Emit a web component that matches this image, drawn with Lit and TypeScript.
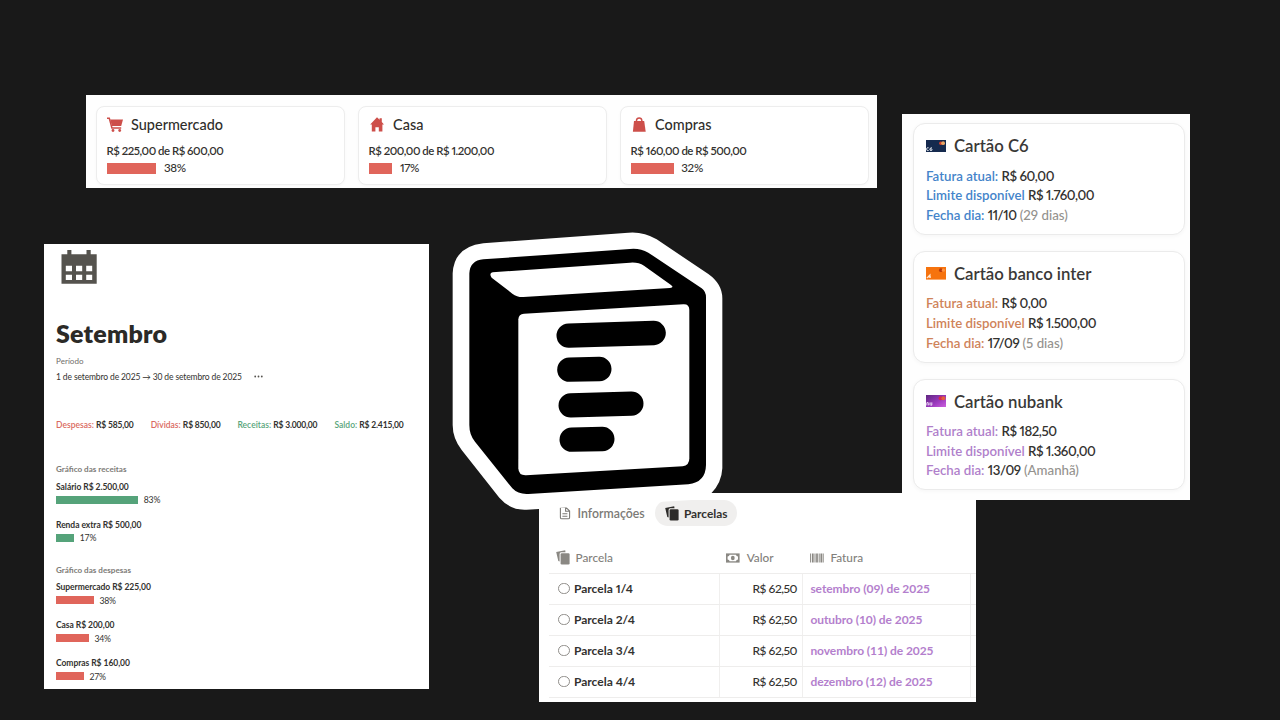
import { LitElement, html, css, svg } from "lit";
import { customElement } from "lit/decorators.js";

const base = css`
  :host {
    display: block;
    box-sizing: border-box;
    font-family: Lato, sans-serif;
    font-variant-numeric: proportional-nums;
    color: #33322f;
    background: #fff;
  }
  * { box-sizing: border-box; }
  svg { display: block; flex: none; }
`;

const cardsIcon = svg`
  <path d="M0.2 1.9 9.2 0.3 9.5 2.3H5.2Q3.6 2.4 3.6 4V11.4L2.3 11Z"/>
  <rect x="4.6" y="3.2" width="9" height="11.2" rx="1.2"/>`;

@customElement("budget-panel")
class BudgetPanel extends LitElement {
  static styles = [base, css`
    :host { display: grid; grid-template-columns: repeat(3, 248.5px); column-gap: 13.5px; padding: 11.5px 0 0 10px; background: #fefefe; }
    .card { height: 78.5px; border: 1px solid #ededed; border-radius: 8px; padding: 7px 0 0 9.6px; box-shadow: 0 1px 3px rgba(0, 0, 0, .03); background: #fff; }
    .head { display: flex; align-items: center; height: 21px; gap: 8.5px; font-size: 14.45px; font-weight: 500; color: #2f2e2b; }
    .sub { line-height: 16px; margin-top: 8px; font-size: 11.4px; font-weight: 600; letter-spacing: -.48px; }
    .meter { display: flex; align-items: center; gap: 7.6px; height: 12px; margin-top: 3px; font-size: 11.6px; font-weight: 500; line-height: 12px; letter-spacing: -.3px; }
    .bar { height: 11px; background: #e0655b; }
    .icon { fill: #cd4f4a; }
    .stroke { fill: none; stroke: #cd4f4a; stroke-width: 1.5; }
  `];
  items = [
    { name: "Supermercado", sub: "R$ 225,00 de R$ 600,00", pct: 38, w: 49.7, icon: svg`<path class="stroke" d="M0 1.2H2.3L4.9 10.9H14.2"/><path d="M3.2 2.4H16L14.2 9H4.9Z"/><circle cx="6" cy="13.5" r="1.4"/><circle cx="12.7" cy="13.5" r="1.4"/>` },
    { name: "Casa", sub: "R$ 200,00 de R$ 1.200,00", pct: 17, w: 23.7, icon: svg`<path d="M8 .2 10.6 2.8V1.2H12.8V5L15 7.6H13.4V14.6H9.8V10.2H6.4V14.6H2.8V7.6H1.2Z"/>` },
    { name: "Compras", sub: "R$ 160,00 de R$ 500,00", pct: 32, w: 43, icon: svg`<path d="M3 4H13.2L14.7 14.8H1.9Z"/><path class="stroke" d="M5.5 5V3.2Q5.7 .9 8.2 .9 10.6 .9 10.8 3.2V5"/>` },
  ];
  render() {
    return this.items.map((i) => html`
      <section class="card">
        <div class="head"><svg class="icon" width="16" height="16" viewBox="0 0 16 16">${i.icon}</svg><span>${i.name}</span></div>
        <div class="sub">${i.sub}</div>
        <div class="meter"><div class="bar" style="width:${i.w}px"></div><span>${i.pct}%</span></div>
      </section>`);
  }
}

@customElement("cards-panel")
class CardsPanel extends LitElement {
  static styles = [base, css`
    :host { display: flex; flex-direction: column; gap: 16px; padding: 9.3px 5.5px 0 11.3px; background: #fefefe; }
    .card { height: 111.7px; border: 1px solid #ebebeb; border-radius: 12px; padding: 10px 0 0 12px; background: #fff; box-shadow: 0 1px 4px rgba(0, 0, 0, .04); }
    .head { display: flex; align-items: center; gap: 8px; height: 23px; font-size: 16.75px; font-weight: 600; color: #3a3937; }
    .rows { margin-top: 9.4px; font-size: 13.25px; line-height: 19.6px; font-weight: 600; white-space: nowrap; }
    .num { letter-spacing: -.45px; color: #33322f; }
    .note { color: #94928e; font-weight: 500; }
    .blue { color: #4484ca; }
    .orange { color: #cf8359; }
    .purple { color: #b07fcb; }
  `];
  items = [
    { name: "Cartão C6", tone: "blue", due: "R$ 60,00", limit: "R$ 1.760,00", day: "11/10", note: "(29 dias)", art: svg`<rect width="20" height="12.6" fill="#152a4e"/><circle cx="14.8" cy="3.2" r="1.7" fill="#d5402c"/><circle cx="17.1" cy="3.2" r="1.9" fill="#e9a765"/><path d="M2.6 7.8H1.3Q.7 7.8 .7 9.2T1.3 10.5H2.6M5.8 7.6Q3.8 8 3.8 9.5 4 10.6 5 10.6 6.2 10.4 6.1 9.4 5.6 8.6 4.2 9.2" fill="none" stroke="#e8edf4" stroke-width="1"/>` },
    { name: "Cartão banco inter", tone: "orange", due: "R$ 0,00", limit: "R$ 1.500,00", day: "17/09", note: "(5 dias)", art: svg`<rect width="20" height="12.6" fill="#f6730e"/><circle cx="14.9" cy="3.2" r="1.9" fill="#b93a0d"/><circle cx="17.4" cy="3.2" r="1.6" fill="#ff9340"/><path d="M.8 11.2 4 7.8V11M2 10H5" fill="none" stroke="#ffe8d4" stroke-width="1.1"/>` },
    { name: "Cartão nubank", tone: "purple", due: "R$ 182,50", limit: "R$ 1.360,00", day: "13/09", note: "(Amanhã)", art: svg`<defs><linearGradient id="nu" x2="1" y2="1"><stop stop-color="#5f2780"/><stop offset=".55" stop-color="#9a38bd"/><stop offset="1" stop-color="#cf63e0"/></linearGradient></defs><rect width="20" height="12.6" fill="url(#nu)"/><circle cx="14.6" cy="3.2" r="2" fill="#d62b4b"/><circle cx="17.4" cy="3.2" r="2" fill="#e2603c"/><path d="M.9 10.4V7.7Q2.6 7.2 2.7 8.6V10.4M4.1 7.4V9.6Q4.4 10.6 5.8 10.1V7.4" fill="none" stroke="#f0e0f8" stroke-width="1"/>` },
  ];
  render() {
    return this.items.map((i) => html`
      <section class="card">
        <div class="head"><svg width="20" height="12.6" viewBox="0 0 20 12.6">${i.art}</svg><span>${i.name}</span></div>
        <div class="rows ${i.tone}">
          <div>Fatura atual: <span class="num">${i.due}</span></div>
          <div>Limite disponível <span class="num">${i.limit}</span></div>
          <div>Fecha dia: <span class="num">${i.day}</span> <span class="note">${i.note}</span></div>
        </div>
      </section>`);
  }
}

@customElement("month-panel")
class MonthPanel extends LitElement {
  static styles = [base, css`
    :host { padding: 5px 0 0 12px; font-size: 8.5px; font-variant-numeric: tabular-nums; }
    .cal { margin-left: 5px; }
    h1 { margin: 31.5px 0 0; font-size: 25px; line-height: 32px; font-weight: 800; letter-spacing: .2px; color: #2b2a27; }
    .label { margin-top: 7px; font-size: 8px; line-height: 10px; letter-spacing: .05px; color: #6f6d69; }
    .date { display: flex; align-items: center; margin-top: 6.3px; gap: 12px; line-height: 10px; letter-spacing: -.13px; white-space: pre; }
    .stats { display: flex; gap: 17px; margin-top: 38.7px; line-height: 10px; white-space: nowrap; font-weight: 700; }
    .stats b { font-weight: 700; color: #33322f; letter-spacing: -.17px; }
    .stats .red, .stats .green { font-weight: 600; letter-spacing: .02px; }
    .red { color: #da6a61; }
    .green { color: #58a57b; }
    .chart { margin-top: 34px; }
    .chart + .chart { margin-top: 6.6px; }
    h2 { margin: 0; font-size: 8.1px; font-weight: 700; line-height: 10px; color: #7d7b77; }
    .item { height: 38px; }
    h2 + .item { margin-top: 7.6px; }
    .name { line-height: 10px; font-weight: 700; letter-spacing: -.05px; }
    .meter { display: flex; align-items: center; gap: 5.8px; height: 9px; margin-top: 3.4px; font-size: 8.7px; letter-spacing: -.25px; }
    .bar { height: 8.3px; }
    .bar.g { background: #55a37a; }
    .bar.r { background: #e0655b; }
  `];
  stats = [["Despesas:", "R$ 585,00", "red"], ["Dívidas:", "R$ 850,00", "red"], ["Receitas:", "R$ 3.000,00", "green"], ["Saldo:", "R$ 2.415,00", "green"]];
  charts = [
    { title: "Gráfico das receitas", tone: "g", items: [["Salário R$ 2.500,00", 83, 82], ["Renda extra R$ 500,00", 17, 18]] },
    { title: "Gráfico das despesas", tone: "r", items: [["Supermercado R$ 225,00", 38, 37.7], ["Casa R$ 200,00", 34, 32.7], ["Compras R$ 160,00", 27, 27.7]] },
  ];
  render() {
    return html`
      <svg class="cal" width="36" height="36" viewBox="0 0 36 36">
        <path fill="#55534e" fill-rule="evenodd" d="M.5 5.3H6.3V1H10.4V5.3H25.5V1H29.7V5.3H35.7V34.7H.5ZM4.8 16.8V22.2H11V16.8ZM15 16.8V22.2H21.2V16.8ZM25.2 16.8V22.2H31.2V16.8ZM4.8 25.7V30.9H11V25.7ZM15 25.7V30.9H21.2V25.7ZM25.2 25.7V30.9H31.2V25.7Z"/>
      </svg>
      <h1>Setembro</h1>
      <div class="label">Período</div>
      <div class="date"><span>1 de setembro de 2025 → 30 de setembro de 2025</span><svg width="9" height="3" viewBox="0 0 9 3" fill="#55534e"><circle cx="1.2" cy="1.5" r=".9"/><circle cx="4.5" cy="1.5" r=".9"/><circle cx="7.8" cy="1.5" r=".9"/></svg></div>
      <div class="stats">${this.stats.map(([l, v, t]) => html`<span><span class=${t}>${l}</span> <b>${v}</b></span>`)}</div>
      ${this.charts.map((c) => html`<section class="chart"><h2>${c.title}</h2>
        ${c.items.map(([n, p, w]) => html`<div class="item"><div class="name">${n}</div>
          <div class="meter"><div class="bar ${c.tone}" style="width:${w}px"></div><span>${p}%</span></div></div>`)}
      </section>`)}`;
  }
}

@customElement("installments-panel")
class InstallmentsPanel extends LitElement {
  static styles = [base, css`
    :host { padding: 6.5px 0 0 10.5px; font-size: 12px; }
    .tabs { display: flex; height: 26.5px; }
    .tab { display: flex; align-items: center; color: #7c7a76; font-weight: 600; }
    .info { padding-left: 8.5px; gap: 6px; font-size: 12.3px; width: 106.4px; white-space: nowrap; }
    .active { width: 82px; padding-left: 9.6px; gap: 4.8px; border-radius: 14px; background: #f0efee; color: #32312e; font-weight: 700; font-size: 11.9px; }
    .row { display: grid; grid-template-columns: 171px 83px 168px 6px; height: 31px; border-bottom: 1px solid #eeedec; }
    .row > div { display: flex; align-items: center; border-right: 1px solid #f0efee; padding-bottom: .6px; }
    .row > div:last-child { border-right: 0; }
    .row.top { margin-top: 17px; height: 30.5px; color: #82807b; font-weight: 500; font-size: 11.8px; }
    .row.top > div { border-right: 0; gap: 6px; }
    .row.top .c1 { padding-left: 7px; gap: 5.4px; }
    .row.top .c2 { padding-left: 5.8px; gap: 6.8px; }
    .row.top .c3 { padding-left: 7.3px; }
    .name { padding-left: 9px; gap: 4.4px; font-weight: 700; }
    .ring { width: 11.5px; height: 11.5px; border: 1px solid #8f8d89; border-radius: 50%; }
    .val { justify-content: flex-end; padding-right: 5px; font-weight: 500; letter-spacing: -.45px; }
    .inv { padding-left: 7.3px; color: #b47fcd; font-weight: 700; letter-spacing: -.06px; font-variant-numeric: tabular-nums; }
  `];
  rows = [["Parcela 1/4", "setembro (09) de 2025"], ["Parcela 2/4", "outubro (10) de 2025"], ["Parcela 3/4", "novembro (11) de 2025"], ["Parcela 4/4", "dezembro (12) de 2025"]];
  render() {
    return html`
      <div class="tabs">
        <div class="tab info"><svg width="14" height="14" viewBox="0 0 14 14" fill="none" stroke="#7c7a76" stroke-width="1.1"><path d="M2.6 1.2H7.8L11.6 5V11.4Q11.6 12.8 10.2 12.8H3.8Q2.4 12.8 2.4 11.4V1.2M7.6 1.4V5.2H11.4M4.4 7.8H9.4M4.4 10.2H9.4"/></svg><span>Informações</span></div>
        <div class="tab active"><svg width="14" height="15" viewBox="0 0 14 15" fill="#2c2b29">${cardsIcon}</svg><span>Parcelas</span></div>
      </div>
      <div class="row top">
        <div class="c1"><svg width="14" height="15" viewBox="0 0 14 15" fill="#8a8883">${cardsIcon}</svg><span>Parcela</span></div>
        <div class="c2"><svg width="14" height="10" viewBox="0 0 14 10"><rect y=".4" width="13.6" height="9.2" fill="#8a8883"/><path d="M3.6 1.8H10Q10.2 3.6 12 3.6V6.4Q10.2 6.4 10 8.2H3.6Q3.4 6.4 1.6 6.4V3.6Q3.4 3.6 3.6 1.8Z" fill="#fff"/><ellipse cx="6.8" cy="5" rx="1.9" ry="2.3" fill="#8a8883"/></svg><span>Valor</span></div>
        <div class="c3"><svg width="14" height="10" viewBox="0 0 14 10"><path d="M.6 .5V9.5M5 .5V9.5M9.2 .5V9.5M13.2 .5V9.5" stroke="#8a8883" stroke-width="1"/><path d="M2.8 .5V9.5M7 .5V9.5M11.3 .5V9.5" stroke="#8a8883" stroke-width="1.7"/></svg><span>Fatura</span></div>
        <div></div>
      </div>
      ${this.rows.map(([n, f]) => html`<div class="row"><div class="name"><span class="ring"></span><span>${n}</span></div><div class="val">R$ 62,50</div><div class="inv">${f}</div><div></div></div>`)}`;
  }
}

@customElement("app-root")
class AppRoot extends LitElement {
  static styles = css`
    :host { display: block; position: relative; width: 1280px; height: 720px; overflow: hidden; background: #191919; }
    .budget, .cards, .month, .installments, .logo { position: absolute; }
    .budget { left: 86px; top: 94.7px; width: 790.6px; height: 93px; }
    .cards { left: 901.7px; top: 114px; width: 288.6px; height: 385.5px; }
    .month { left: 44px; top: 244px; width: 385px; height: 445px; }
    .installments { left: 538.6px; top: 493.4px; width: 437.5px; height: 208.5px; }
    .logo { left: 440px; top: 220px; width: 300px; height: 300px; }
  `;
  render() {
    return html`
      <budget-panel class="budget"></budget-panel>
      <installments-panel class="installments"></installments-panel>
      <cards-panel class="cards"></cards-panel>
      <month-panel class="month"></month-panel>
      <svg class="logo" viewBox="0 0 900 900">
        <path fill="#fff" d="M130 70 565 38Q610 34 650 58L805 162Q847 192 847 235V745Q845 790 812 822 790 838 755 840L260 869Q212 872 178 833L65 690Q38 655 38 615V160Q42 80 130 70Z"/>
        <path d="M130 118 570 87Q600 84 625 98L785 205Q798 215 798 232V735Q797 787 745 793L265 822Q235 824 217 805L105 665Q88 645 88 615V160Q90 122 130 118Z"/>
        <path fill="#fff" d="M158 157 570 128Q595 126 612 137L692 194Q704 203 690 204L250 231Q232 232 217 221L155 173Q146 160 158 157Z"/>
        <path fill="#fff" d="M252 281 730 253Q748 252 748 270V715Q748 737 728 739L258 766Q236 767 235 745V298Q236 282 252 281Z"/>
        <path fill="none" stroke="#000" stroke-width="73" stroke-linecap="round" d="M386 347 641 339M388 449 478 447M392 556 574 551M395 659 487 657"/>
      </svg>`;
  }
}
